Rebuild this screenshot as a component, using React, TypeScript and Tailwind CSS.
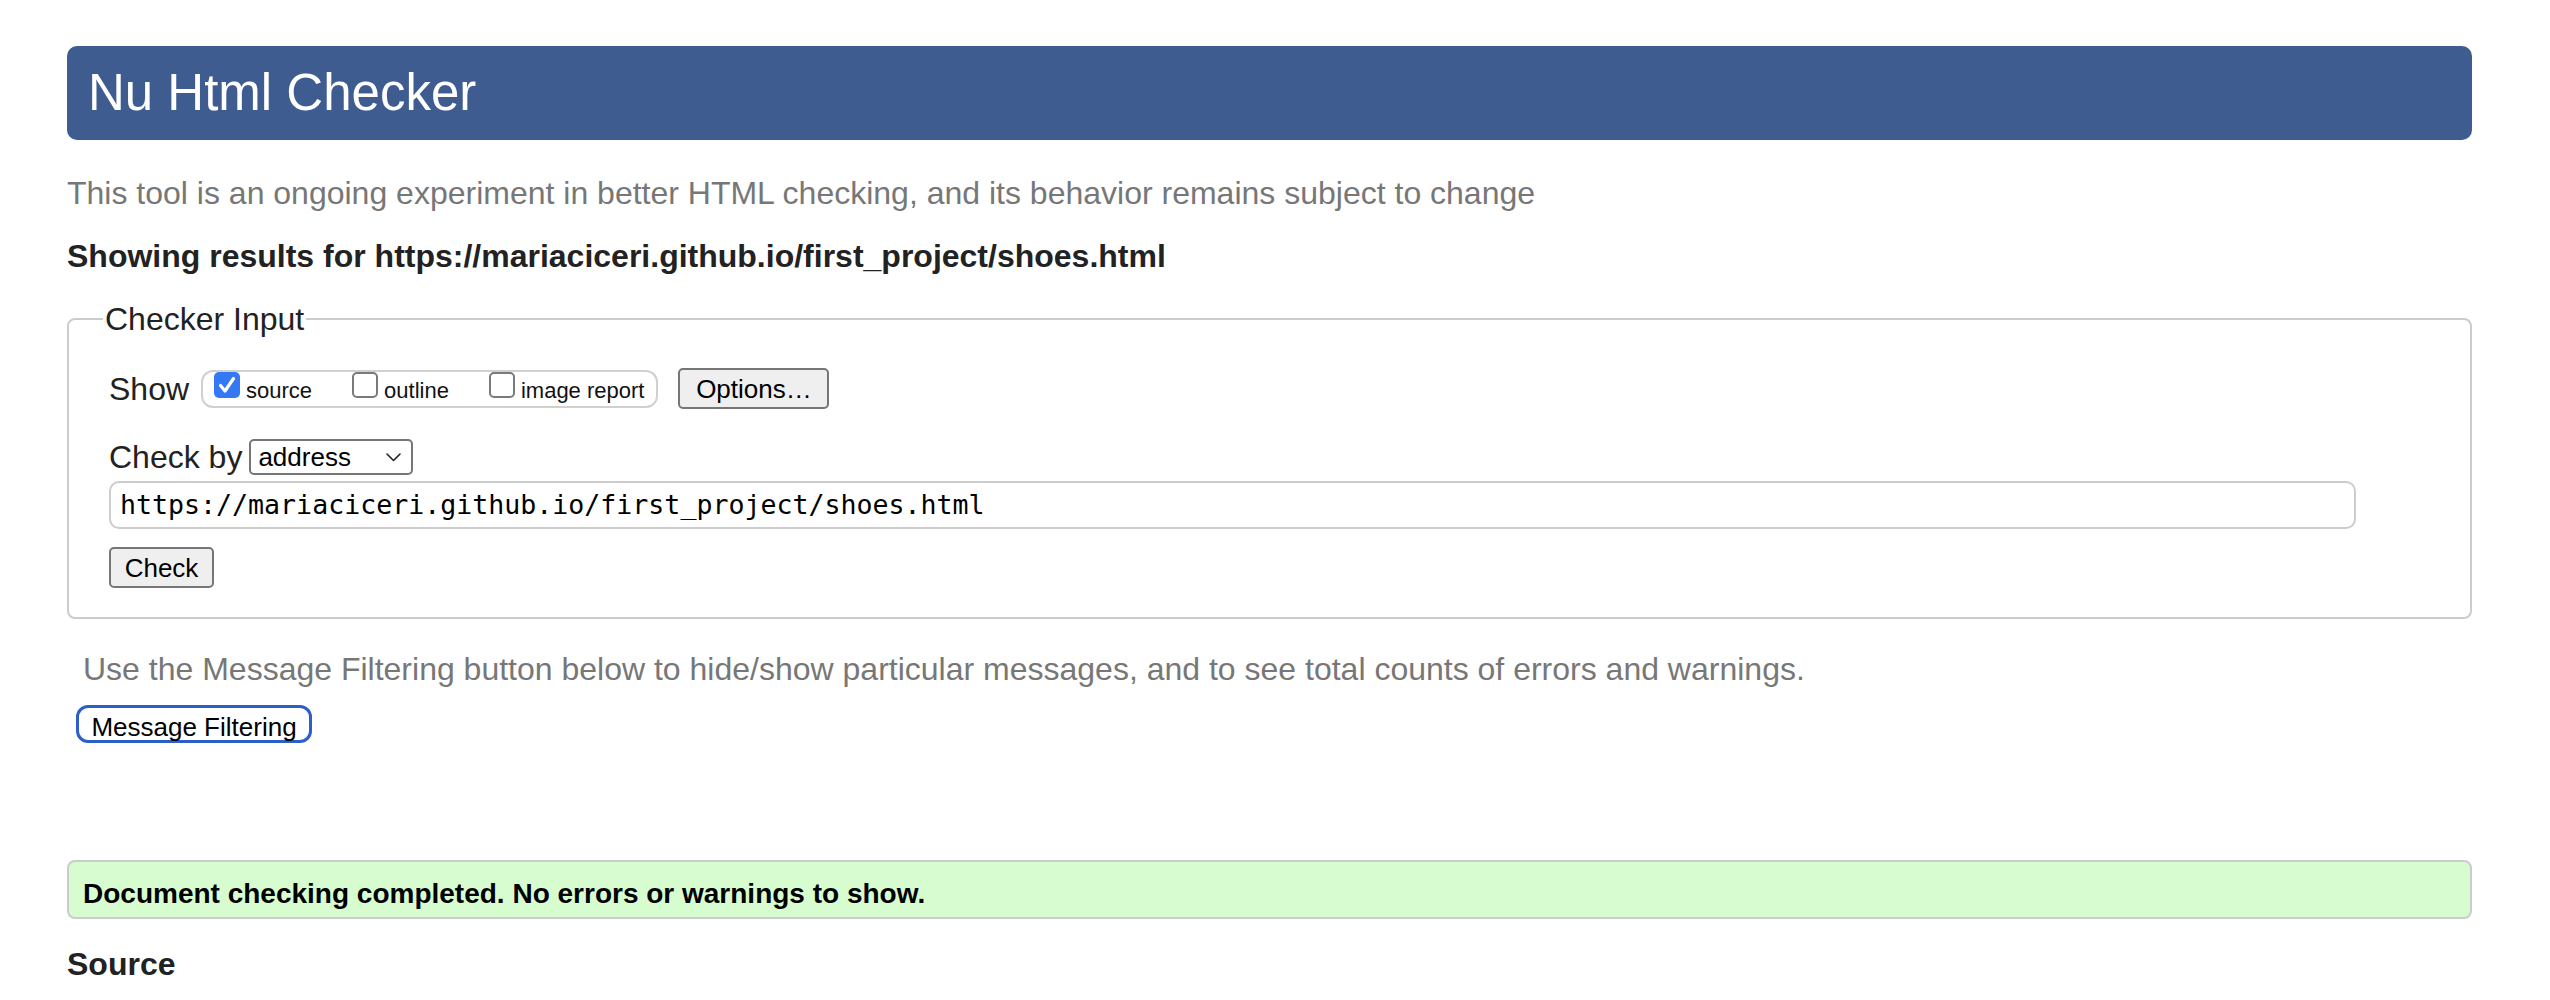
import React from 'react'

const sans = "font-['Liberation_Sans',Arial,Helvetica,sans-serif]"

const CheckBox: React.FC<{ checked?: boolean }> = ({ checked }) =>
  checked ? (
    <div className="w-[26px] h-[26px] rounded-[5px] bg-[#3478f6] flex items-center justify-center shrink-0">
      <svg width="26" height="26" viewBox="0 0 26 26">
        <path d="M6.5 13.5 L11 19 L19.5 6.5" stroke="white" strokeWidth="3.2" fill="none" strokeLinecap="round" strokeLinejoin="round" />
      </svg>
    </div>
  ) : (
    <div className="w-[26px] h-[26px] rounded-[5px] border-2 border-[#7a7a7a] bg-white shrink-0" />
  )

const ShowOption: React.FC<{ label: string; checked?: boolean }> = ({ label, checked }) => (
  <label className="flex items-baseline gap-[6px]">
    <CheckBox checked={checked} />
    <span className="text-[22px] leading-[26px] text-[#111]">{label}</span>
  </label>
)

export default function App() {
  return (
    <div className={`${sans} bg-white min-h-screen pt-[46px] pl-[67px]`}>
      <div className="w-[2405px]">
        {/* Title bar */}
        <h1 className="h-[94px] rounded-[10px] bg-[#3e5c90] flex items-center px-[21px] text-[51px] text-white">
          Nu Html Checker
        </h1>

        <p className="mt-[34px] text-[32px] leading-[38px] text-[#777]">
          This tool is an ongoing experiment in better HTML checking, and its behavior remains subject to change
        </p>
        <p className="mt-[25px] text-[32px] leading-[38px] font-bold text-[#222]">
          Showing results for https://mariaciceri.github.io/first_project/shoes.html
        </p>

        {/* Checker Input */}
        <fieldset className="mt-[26px] border-2 border-[#cccccc] rounded-[8px] pl-[40px] pt-[31px] pb-[29px]">
          <legend className="-ml-[6px] px-[2px] text-[32px] leading-[36px] text-[#222]">Checker Input</legend>

          <div className="flex items-center h-[41px]">
            <span className="text-[32px] leading-[38px] text-[#222]">Show</span>
            <div className="ml-[12px] h-[38px] border-2 border-[#d0d0d0] rounded-[12px] pl-[11px] pr-[12px] flex items-start gap-[40px]">
              <ShowOption label="source" checked />
              <ShowOption label="outline" />
              <ShowOption label="image report" />
            </div>
            <button className="ml-[20px] w-[151px] h-[41px] border-2 border-[#767676] rounded-[5px] bg-[#efefef] text-[26px] text-black">
              Options…
            </button>
          </div>

          <div className="mt-[29px] flex items-center gap-[7px] h-[38px]">
            <span className="text-[32px] leading-[38px] text-[#222]">Check by</span>
            <div className="w-[164px] h-[36px] border-2 border-[#767676] rounded-[5px] bg-white flex items-center justify-between pl-[7px] pr-[10px]">
              <span className="text-[26px] text-black">address</span>
              <svg width="15" height="9" viewBox="0 0 15 9">
                <path d="M1 1 L7.5 7.5 L14 1" stroke="#222" strokeWidth="1.6" fill="none" strokeLinecap="round" strokeLinejoin="round" />
              </svg>
            </div>
          </div>

          <div className="mt-[5px] w-[2247px] h-[48px] border-2 border-[#cccccc] rounded-[10px] bg-white flex items-center pl-[9px] font-['DejaVu_Sans_Mono',monospace] text-[26.6px] text-black">
            https://mariaciceri.github.io/first_project/shoes.html
          </div>

          <button className="mt-[18px] w-[105px] h-[41px] border-2 border-[#767676] rounded-[5px] bg-[#efefef] text-[26px] text-black">
            Check
          </button>
        </fieldset>

        {/* Message filtering */}
        <p className="mt-[31px] pl-[16px] text-[32px] leading-[38px] text-[#777]">
          Use the Message Filtering button below to hide/show particular messages, and to see total counts of errors and warnings.
        </p>
        <button className="mt-[17px] ml-[9px] h-[38px] w-[236px] border-[3px] border-[#2c5fc8] rounded-[12px] bg-white text-[26px] text-black">
          Message Filtering
        </button>

        {/* Result */}
        <div className="mt-[117px] h-[59px] border-2 border-[#cccccc] rounded-[8px] bg-[#d6fcd0] pl-[14px] pt-[16px]">
          <p className="text-[28px] leading-[32px] font-bold text-black">
            Document checking completed. No errors or warnings to show.
          </p>
        </div>

        <h2 className="mt-[26px] text-[32px] leading-[38px] font-bold text-[#222]">Source</h2>
      </div>
    </div>
  )
}
